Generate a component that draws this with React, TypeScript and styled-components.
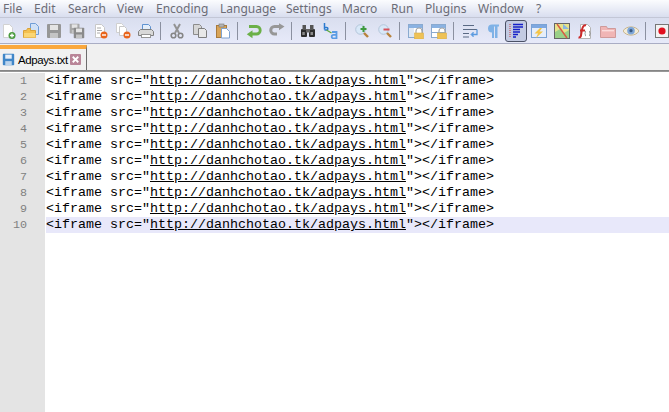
import { ReactNode } from "react";
import styled, { createGlobalStyle } from "styled-components";

const GlobalStyle = createGlobalStyle`
  html, body { margin: 0; padding: 0; background: #fff; overflow: hidden; }
`;

const Page = styled.div`
  width: 669px;
  height: 412px;
  display: flex;
  flex-direction: column;
  overflow: hidden;
`;

const MenuBar = styled.div`
  height: 17px;
  display: flex;
  align-items: center;
  background: linear-gradient(#fbfcfe, #d9deef);
  border-bottom: 1px solid #c3c7d6;
  font-family: "Noto Sans", sans-serif;
  font-size: 12px;
  color: #6b6c76;
`;

const MenuItem = styled.span<{ $w: number }>`
  width: ${(p) => p.$w}px;
  padding-left: 3px;
  box-sizing: border-box;
  white-space: nowrap;
`;

const Toolbar = styled.div`
  height: 25px;
  display: flex;
  align-items: center;
  gap: 7px;
  background: linear-gradient(#d9deef, #e7eaf9);
  border-bottom: 1px solid #a9adc4;
`;

const ToolIcon = styled.div<{ $active?: boolean }>`
  width: 16px;
  height: 16px;
  flex: none;
  position: relative;
  svg { display: block; }
  ${(p) =>
    p.$active
      ? `&::before {
          content: "";
          position: absolute;
          inset: -3px -3px -3px -3px;
          border: 1px solid #4a5165;
          border-radius: 3px;
          background: #c3cbe2;
        }
        svg { position: relative; }`
      : ""}
`;

const Sep = styled.div`
  width: 1px;
  height: 18px;
  flex: none;
  margin: 0 1px 0 -1px;
  background: #8b90a0;
`;

const TabBar = styled.div`
  height: 26px;
  display: flex;
  background: #f0f0f0;
`;

const Tab = styled.div`
  width: 87px;
  margin-top: 1px;
  box-sizing: border-box;
  border-top: 4px solid #faa83d;
  border-right: 1px solid #6d6d6d;
  display: flex;
  align-items: center;
  padding-left: 2px;
  background: #f1f1f1;
  font-family: "Liberation Sans", sans-serif;
  font-size: 11.5px;
  letter-spacing: -0.4px;
  color: #000;
`;

const TabLabel = styled.span`
  margin-left: 3px;
  width: 52px;
  white-space: nowrap;
`;

const EditorTop = styled.div`
  height: 3px;
  background: linear-gradient(#7d7d7d, #a0a0a0 66%, #fff 66%);
`;

const Editor = styled.div`
  flex: 1;
  display: flex;
  background: #fff;
`;

const Gutter = styled.div`
  width: 45px;
  flex: none;
  background: #e4e4e4;
`;

const LineNumber = styled.div`
  height: 16px;
  line-height: 16px;
  padding-right: 18px;
  text-align: right;
  font-family: "Liberation Mono", monospace;
  font-size: 11.67px;
  color: #808080;
`;

const Code = styled.div`
  flex: 1;
  padding-left: 1px;
`;

const CodeLine = styled.div<{ $current?: boolean }>`
  height: 16px;
  line-height: 16px;
  font-family: "Liberation Mono", monospace;
  font-size: 13.33px;
  white-space: pre;
  color: #000;
  background: ${(p) => (p.$current ? "#e8e8fa" : "transparent")};
`;

const Link = styled.span`
  text-decoration: underline;
`;

const S = ({ children }: { children: ReactNode }) => (
  <svg width="16" height="16" viewBox="0 0 16 16">
    {children}
  </svg>
);

const Sheet = ({ fill = "#fff", stroke = "#b9b9b9" }: { fill?: string; stroke?: string }) => (
  <path d="M3.5 1.5h6l3 3v10h-9z" fill={fill} stroke={stroke} />
);

const Floppy = ({ x = 0, y = 0, s = 1, c = "#8c8c8c" }: { x?: number; y?: number; s?: number; c?: string }) => (
  <g transform={`translate(${x} ${y}) scale(${s})`}>
    <rect x="1" y="1" width="14" height="14" rx="1" fill={c} />
    <rect x="4" y="2" width="8" height="5" fill="#e4e4e4" />
    <rect x="4" y="10" width="8" height="5" fill="#c4c4c4" />
  </g>
);

const Minus = ({ x = 12, y = 12 }: { x?: number; y?: number }) => (
  <>
    <circle cx={x} cy={y} r="3.5" fill="#e8641c" />
    <rect x={x - 2} y={y - 0.7} width="4" height="1.4" fill="#fff" />
  </>
);

const Lens = ({ add }: { add: boolean }) => (
  <>
    <circle cx="6.5" cy="6.5" r="4.8" fill="#d8e8f8" stroke="#b4c6da" />
    <path d="M10 10l4 4" stroke="#b8823c" strokeWidth="2.4" />
    {add ? (
      <path d="M9.5 3v6M6.5 6h6" stroke="#3e9a3e" strokeWidth="2" />
    ) : (
      <path d="M6.5 6.5h6" stroke="#d8505a" strokeWidth="2" />
    )}
  </>
);

const Lock = () => (
  <>
    <path d="M8 10V8a3 3 0 0 1 6 0v2" fill="none" stroke="#a8a8a8" strokeWidth="1.2" />
    <rect x="6.5" y="10" width="9" height="6" fill="#eec257" stroke="#d9ae4c" strokeWidth=".6" />
  </>
);

const Win = ({ split }: { split: boolean }) => (
  <>
    <rect x="0.5" y="1.5" width="14" height="13" fill="#fff" stroke="#8aaad0" />
    <rect x="1" y="2" width="13" height="3" fill="#8ab2e2" />
    {split ? (
      <rect x="1" y="5" width="5" height="9" fill="#dfe8f5" />
    ) : (
      <rect x="1" y="9" width="13" height="1" fill="#8aaad0" />
    )}
    <Lock />
  </>
);

const icons: Record<string, ReactNode> = {
  new: (
    <S>
      <Sheet fill="#fff" stroke="#d2d2d2" />
      <circle cx="12" cy="12.5" r="3.5" fill="#4c9c40" />
      <path d="M12 10.5v4M10 12.5h4" stroke="#fff" strokeWidth="1.3" />
    </S>
  ),
  open: (
    <S>
      <path d="M7.5 .5h5l3 3v8h-8z" fill="#cfe0f6" stroke="#6f9dd6" />
      <path d="M.5 7.5h3l1-2h3v2h5v7h-12z" fill="#f4c04e" stroke="#d9a23a" />
      <path d="M1 10h11.5v4.5H1z" fill="#fbd675" />
    </S>
  ),
  save: (
    <S>
      <Floppy c="#979797" />
    </S>
  ),
  saveall: (
    <S>
      <Floppy x={0} y={0} s={0.7} c="#a8a8a8" />
      <Floppy x={4} y={4} s={0.75} c="#8a8a8a" />
    </S>
  ),
  close: (
    <S>
      <Sheet fill="#fff" stroke="#c8c8c8" />
      <path d="M5 5h4M5 7.5h5M5 10h3" stroke="#aaa" />
      <Minus />
    </S>
  ),
  closeall: (
    <S>
      <path d="M1.5 .5h5l2 2v7h-7z" fill="#fff" stroke="#d0d0d0" />
      <path d="M4.5 3.5h5l2 2v7h-7z" fill="#fff" stroke="#c8c8c8" />
      <Minus />
    </S>
  ),
  print: (
    <S>
      <path d="M4.5 1.5h6l2 2v4h-8z" fill="#e4eefa" stroke="#5f92d0" />
      <path d="M.5 8.5l2-2h11l2 2v4h-15z" fill="#d8d8d8" stroke="#808080" />
      <rect x="3.5" y="11.5" width="9" height="3" fill="#fff" stroke="#969696" />
    </S>
  ),
  cut: (
    <S>
      <path d="M5 1l5 9M11 1L6 10" stroke="#939393" strokeWidth="2" />
      <circle cx="4.5" cy="12.5" r="2.3" fill="none" stroke="#858585" strokeWidth="1.6" />
      <circle cx="11.5" cy="12.5" r="2.3" fill="none" stroke="#858585" strokeWidth="1.6" />
    </S>
  ),
  copy: (
    <S>
      <path d="M1.5 1.5h6l2 2v8h-8z" fill="#d6d6d6" stroke="#8c8c8c" />
      <path d="M6.5 5.5h6l2 2v7h-8z" fill="#e8e8e8" stroke="#7e7e7e" />
    </S>
  ),
  paste: (
    <S>
      <rect x="1.5" y="2.5" width="10" height="12" fill="#d9a458" stroke="#a87a3c" />
      <rect x="4" y="1" width="5" height="3" fill="#b4b4b4" stroke="#777" strokeWidth=".6" />
      <path d="M6.5 5.5h5l3 3v6.5h-8z" fill="#fff" stroke="#7ea2d0" />
    </S>
  ),
  undo: (
    <S>
      <path d="M3 3.5h7.5a3.7 3.7 0 0 1 0 7.5H4" fill="none" stroke="#6bb048" strokeWidth="2.8" />
      <path d="M6.5 7.2v8L.8 11.2z" fill="#6bb048" />
    </S>
  ),
  redo: (
    <S>
      <path d="M13 3.5H5.5a3.7 3.7 0 0 0 0 7.5H8" fill="none" stroke="#979797" strokeWidth="3" />
      <path d="M10 .2v7l5.5-3.6z" fill="#979797" />
    </S>
  ),
  find: (
    <S>
      <rect x="1" y="6" width="6" height="8" rx="1" fill="#2d2d2d" />
      <rect x="9" y="6" width="6" height="8" rx="1" fill="#2d2d2d" />
      <rect x="2.5" y="2" width="3.5" height="5" fill="#555" />
      <rect x="10" y="2" width="3.5" height="5" fill="#555" />
      <rect x="6" y="6" width="4" height="3.5" fill="#666" />
      <rect x="2.3" y="9" width="2.5" height="3" fill="#8a8a8a" />
      <rect x="10.5" y="9" width="2.5" height="3" fill="#8a8a8a" />
    </S>
  ),
  replace: (
    <S>
      <path d="M1.5 0v6.5M1.5 4.5h2.2a1.2 1.2 0 0 1 0 2.4H1.5" fill="none" stroke="#2a7ad0" strokeWidth="1.5" />
      <path d="M3.5 7l5 3" stroke="#5fa83e" strokeWidth="1.4" />
      <path d="M9 9h4.5v6.5h-3a1.8 1.8 0 0 1 0-3.6h3" fill="none" stroke="#5a9ce4" strokeWidth="1.8" />
    </S>
  ),
  zoomin: (
    <S>
      <Lens add />
    </S>
  ),
  zoomout: (
    <S>
      <Lens add={false} />
    </S>
  ),
  syncv: (
    <S>
      <Win split />
    </S>
  ),
  synch: (
    <S>
      <Win split={false} />
    </S>
  ),
  wrap: (
    <S>
      <path d="M1 2.5h11M1 6.5h14M1 10.5h6M1 14h6" stroke="#5a6a84" strokeWidth="1.2" />
      <path d="M15 6.5v5H10" fill="none" stroke="#5a9ae0" strokeWidth="1.3" />
      <path d="M11.5 9l-2.5 2.5 2.5 2.5" fill="#5a9ae0" stroke="#5a9ae0" />
    </S>
  ),
  para: (
    <S>
      <path d="M7 1.5h7v2h-1.5V15H10V3.5H9V15H7V9.5a4 4 0 0 1 0-8z" fill="#7fb2e6" />
    </S>
  ),
  indent: (
    <S>
      <path d="M2 1v14" stroke="#d04040" strokeWidth="1" strokeDasharray="1 1" />
      <path d="M5 1.5h10M5 4h10M5 6.5h7M5 9h7M5 11.5h5M5 14h3" stroke="#1520c8" strokeWidth="1.5" />
    </S>
  ),
  udl: (
    <S>
      <rect x="0.5" y="1.5" width="15" height="13" fill="#e6eefa" stroke="#7aa2d4" />
      <rect x="1" y="2" width="14" height="3" fill="#7ea8e0" />
      <path d="M9 5L3.5 10.5H7L5 15l7-6.5H8.5L11 5z" fill="#f4c548" />
    </S>
  ),
  map: (
    <S>
      <rect x="0.5" y="0.5" width="15" height="15" fill="#e8e48c" stroke="#666" />
      <path d="M1 9l5-3 4 4 5-3v8H1z" fill="#9ad088" />
      <path d="M3 1l10 14" stroke="#d85a44" strokeWidth="1.4" />
      <path d="M9 1v5h6" fill="#8ab8e2" />
    </S>
  ),
  func: (
    <S>
      <path d="M3.5 1.5h7l3 3v11h-10z" fill="#fff" stroke="#b4b4b4" />
      <path d="M1.5 14.5c3 .5 2.5-3 3.2-6.5S6.5 1.5 9 2.5M3 7.5h5" fill="none" stroke="#cc2a2a" strokeWidth="2" />
      <path d="M9 8c-1 0-.5 2-1 2.5.5.5 0 2.5 1 2.5M12 8c1 0 .5 2 1 2.5-.5.5 0 2.5-1 2.5" fill="none" stroke="#777" strokeWidth=".8" />
    </S>
  ),
  folder: (
    <S>
      <path d="M.5 3.5h6l1 2h8v9H.5z" fill="#f0b5b5" stroke="#cf9a9a" />
      <rect x="2" y="7" width="12" height="1.4" fill="#fbdcdc" />
    </S>
  ),
  eye: (
    <S>
      <path d="M0 8c3-5.5 13-5.5 16 0-3 5.5-13 5.5-16 0z" fill="#f3ecd8" stroke="#c7b48c" />
      <circle cx="8" cy="7.7" r="3.8" fill="#7ea6d8" />
      <circle cx="8" cy="7.7" r="1.6" fill="#3a5a82" />
    </S>
  ),
  record: (
    <S>
      <rect x="1.5" y="1.5" width="13" height="13" fill="#f2f2f2" stroke="#777" />
      <circle cx="8" cy="8" r="3.6" fill="#e0101e" />
    </S>
  ),
};

const toolbar = [
  ["new", "open", "save", "saveall", "close", "closeall", "print"],
  ["cut", "copy", "paste"],
  ["undo", "redo"],
  ["find", "replace"],
  ["zoomin", "zoomout"],
  ["syncv", "synch"],
  ["wrap", "para", "indent", "udl", "map", "func", "folder", "eye"],
  ["record"],
];

const menus: [string, number][] = [
  ["File", 31],
  ["Edit", 34],
  ["Search", 49],
  ["View", 39],
  ["Encoding", 64],
  ["Language", 66],
  ["Settings", 56],
  ["Macro", 49],
  ["Run", 34],
  ["Plugins", 53],
  ["Window", 58],
  ["?", 20],
];

const lines = Array.from({ length: 10 }, (_, i) => i + 1);

export default function App() {
  return (
    <Page>
      <GlobalStyle />
      <MenuBar>
        {menus.map(([label, w]) => (
          <MenuItem key={label} $w={w}>
            {label}
          </MenuItem>
        ))}
      </MenuBar>
      <Toolbar>
        {toolbar.flatMap((group, i) => [
          ...(i > 0 ? [<Sep key={`sep${i}`} />] : []),
          ...group.map((name) => (
            <ToolIcon key={name} $active={name === "indent"}>
              {icons[name]}
            </ToolIcon>
          )),
        ])}
      </Toolbar>
      <TabBar>
        <Tab>
          <svg width="13" height="13" viewBox="0 0 16 16">
            <rect x="1" y="1" width="14" height="14" rx="1" fill="#3f86c8" />
            <rect x="4" y="2" width="8" height="5" fill="#e8f0fa" />
            <rect x="4" y="10" width="8" height="5" fill="#bcd4ec" />
          </svg>
          <TabLabel>Adpays.txt</TabLabel>
          <svg width="11" height="11" viewBox="0 0 12 12">
            <rect width="12" height="12" rx="1" fill="#b98598" />
            <path d="M3 3l6 6M9 3l-6 6" stroke="#fff" strokeWidth="2" />
          </svg>
        </Tab>
      </TabBar>
      <EditorTop />
      <Editor>
        <Gutter>
          {lines.map((n) => (
            <LineNumber key={n}>{n}</LineNumber>
          ))}
        </Gutter>
        <Code>
          {lines.map((n) => (
            <CodeLine key={n} $current={n === 10}>
              {'<iframe src="'}
              <Link>http://danhchotao.tk/adpays.html</Link>
              {'"></iframe>'}
            </CodeLine>
          ))}
        </Code>
      </Editor>
    </Page>
  );
}
